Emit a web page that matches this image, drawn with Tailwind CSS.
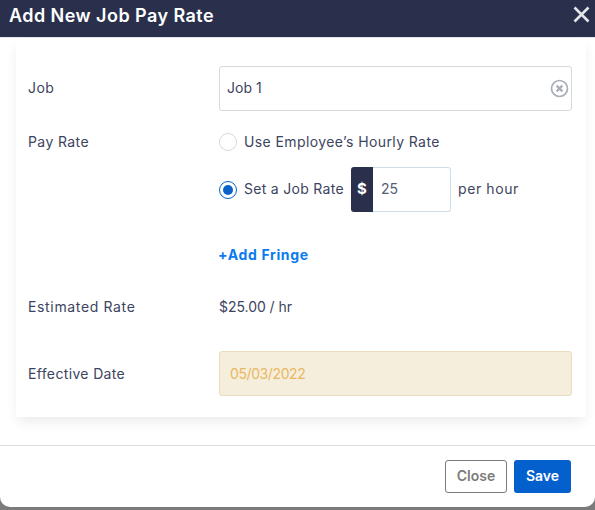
<!doctype html>
<html><head><meta charset="utf-8"><script src="https://cdn.jsdelivr.net/npm/@tailwindcss/browser@4"></script></head>
<body class="m-0">
<div class="w-[595px] h-[510px] overflow-hidden bg-[#7b7b7b] font-['Inter',sans-serif] text-[14px] text-[#3d4460]">
  <div class="h-[507px] bg-white rounded-b-[10px] flex flex-col">
    <div class="h-[38px] bg-[#2a304c] flex items-center justify-between pl-[9px] pr-[5px] border-b border-[#e6e8ee]">
      <span class="text-white font-semibold text-[18px] tracking-[0.45px] leading-none -mt-[5px]">Add New Job Pay Rate</span>
      <svg class="w-[17px] h-[17px] -mt-[9px]" viewBox="0 0 17 17"><path d="M1.5 1.5 L15.5 15.5 M15.5 1.5 L1.5 15.5" stroke="#e4e5ea" stroke-width="2.6" fill="none"/></svg>
    </div>
    <div class="ml-[16px] w-[570px] h-[379px] shadow-[0_6px_12px_-2px_rgba(0,0,0,0.09)] pl-[12px] pr-[14px] pt-[28px] flex flex-col tracking-[0.4px]">
      <div class="flex items-center h-[45px]">
        <span class="w-[191px] shrink-0 mb-[2px]">Job</span>
        <div class="flex-1 h-[45px] border border-[#d8d8d8] rounded-[3px] flex items-center justify-between pl-[7px] pr-[2px]">
          <span class="mb-[2px] tracking-[0px]">Job 1</span>
          <svg class="w-[19px] h-[19px]" viewBox="0 0 19 19"><circle cx="9.5" cy="9.5" r="8" fill="none" stroke="#a9acb9" stroke-width="1.7"/><path d="M6.6 6.6 L12.4 12.4 M12.4 6.6 L6.6 12.4" stroke="#a9acb9" stroke-width="2.2" fill="none"/></svg>
        </div>
      </div>
      <div class="flex items-center h-[20px] mt-[21px]">
        <span class="w-[191px] shrink-0 mb-[2px]">Pay Rate</span>
        <span class="w-[18px] h-[18px] rounded-full border border-[#d8d8d8] shrink-0"></span>
        <span class="ml-[7px] mb-[2px]">Use Employee’s Hourly Rate</span>
      </div>
      <div class="flex items-center h-[45px] mt-[15px] pl-[191px]">
        <span class="w-[18px] h-[18px] rounded-full border-[1.5px] border-[#0a62c9] shrink-0 flex items-center justify-center"><span class="w-[10px] h-[10px] rounded-full bg-[#0a62c9]"></span></span>
        <span class="ml-[7px] w-[107px] shrink-0 whitespace-nowrap tracking-[0.3px] mb-[2px]">Set a Job Rate</span>
        <div class="flex h-[45px] w-[100px] shrink-0">
          <span class="w-[22px] bg-[#2a304c] rounded-l-[3px] text-white font-bold text-[15px] flex items-center justify-center">$</span>
          <span class="flex-1 border border-l-0 border-[#cfdde6] rounded-r-[3px] flex items-center pl-[8px] pb-[2px] text-[#555b75] tracking-[0px]">25</span>
        </div>
        <span class="ml-[7px] whitespace-nowrap mb-[2px] tracking-[0.6px]">per hour</span>
      </div>
      <div class="flex items-center h-[20px] mt-[33px] pl-[191px]">
        <span class="text-[#0a7bf0] font-bold tracking-[0.65px] -ml-[1px] mb-[2px]">+Add Fringe</span>
      </div>
      <div class="flex items-center h-[20px] mt-[32px]">
        <span class="w-[191px] shrink-0 mb-[2px] tracking-[0.65px]">Estimated Rate</span>
        <span class="mb-[2px] tracking-[-0.05px]">$25.00 / hr</span>
      </div>
      <div class="flex items-center h-[45px] mt-[34px]">
        <span class="w-[191px] shrink-0 tracking-[0.35px]">Effective Date</span>
        <div class="flex-1 h-[45px] bg-[#f6eedd] border border-[#eadcbd] rounded-[3px] flex items-center pl-[10px] pb-[1px] tracking-[-0.4px] text-[#e8b860]">05/03/2022</div>
      </div>
    </div>
    <div class="mt-[28px] border-t border-[#dedede] flex justify-end gap-[7px] pt-[14px] pr-[24px]">
      <button class="w-[62px] h-[33px] border border-[#7b7b7b] rounded-[3px] bg-white text-[#7b7b7b] font-semibold pb-[2px]">Close</button>
      <button class="w-[57px] h-[33px] rounded-[3px] bg-[#0360cc] text-white font-semibold pb-[2px]">Save</button>
    </div>
  </div>
</div>
</body></html>
